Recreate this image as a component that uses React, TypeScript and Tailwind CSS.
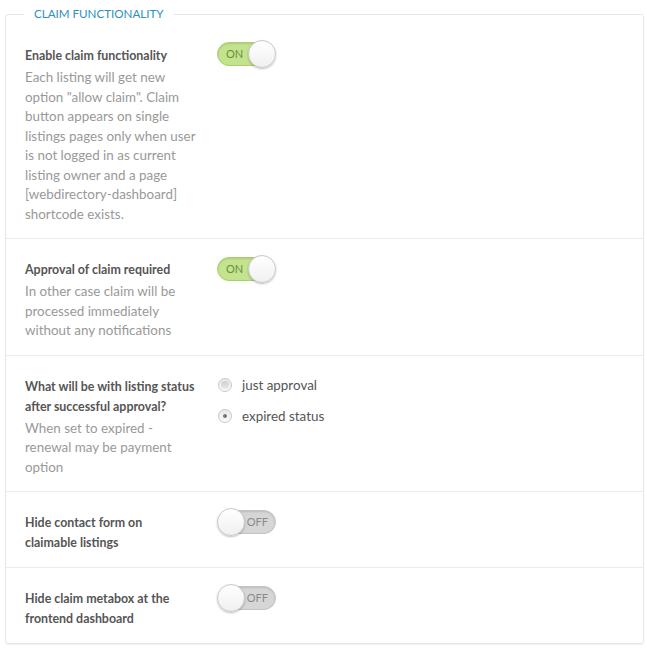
import React from "react";

function Toggle({ on }: { on: boolean }) {
  if (on) {
    return (
      <div className="relative h-[28px] w-[59px]">
        <div className="absolute left-0 top-[2px] h-[24px] w-[52px] rounded-full border border-[#a8cf72] bg-[#c4e38e] shadow-[inset_0_1px_2px_rgba(0,0,0,0.12)]">
          <span className="absolute left-[8px] top-[3px] text-[11px] leading-[16px] text-[#6b8f3a]">ON</span>
        </div>
        <div className="absolute right-0 top-0 h-[28px] w-[28px] rounded-full border border-[#c9c9c9] bg-gradient-to-b from-[#ffffff] to-[#f0f0f0] shadow-[0_1px_2px_rgba(0,0,0,0.25)]" />
      </div>
    );
  }
  return (
    <div className="relative h-[28px] w-[59px]">
      <div className="absolute right-0 top-[2px] h-[24px] w-[52px] rounded-full border border-[#c4c4c4] bg-[#d6d6d6] shadow-[inset_0_1px_2px_rgba(0,0,0,0.12)]">
        <span className="absolute right-[7px] top-[3px] text-[11px] leading-[16px] text-[#8a8a8a]">OFF</span>
      </div>
      <div className="absolute left-0 top-0 h-[28px] w-[28px] rounded-full border border-[#c9c9c9] bg-gradient-to-b from-[#ffffff] to-[#f0f0f0] shadow-[0_1px_2px_rgba(0,0,0,0.25)]" />
    </div>
  );
}

function Radio({ checked, label }: { checked: boolean; label: string }) {
  return (
    <div className="flex h-[31px] items-center">
      <div className="ml-[1px] flex h-[14px] w-[14px] items-center justify-center rounded-full border border-[#c8c8c8] bg-gradient-to-b from-[#e9e9e9] to-[#fafafa]">
        {checked ? (
          <div className="h-[4px] w-[4px] rounded-full bg-[#777]" />
        ) : (
          <div className="h-[8px] w-[8px] rounded-full bg-gradient-to-b from-[#d0d0d0] to-[#e8e8e8]" />
        )}
      </div>
      <span className="ml-[10px] text-[13.4px] leading-[20px] text-[#555]">{label}</span>
    </div>
  );
}

function Row({
  title,
  desc,
  control,
  first,
  last,
  controlPt = "pt-[16px]",
}: {
  title: React.ReactNode;
  desc?: string;
  control: React.ReactNode;
  first?: boolean;
  last?: boolean;
  controlPt?: string;
}) {
  return (
    <div className={`flex ${last ? "" : "border-b border-[#ebebeb]"}`}>
      <div className={`w-[211px] shrink-0 pl-[19px] pr-[18px] ${first ? "pt-[24px]" : "pt-[21px]"} pb-[14px]`}>
        <div className="max-w-[171px] text-[12.4px] font-bold leading-[20px] text-[#555]">{title}</div>
        {desc && <div className="mt-[2px] text-[13.4px] leading-[19.5px] text-[#999]">{desc}</div>}
      </div>
      <div className={`${first ? "pt-[18px]" : controlPt}`}>{control}</div>
    </div>
  );
}

export default function App() {
  return (
    <div className="min-h-[649px] bg-white pt-[6px]" style={{ fontFamily: "Lato, 'Open Sans', sans-serif" }}>
      <fieldset className="ml-[5px] mr-[3px] rounded-[3px] border border-[#e6e6e6] shadow-[0_1px_1px_rgba(0,0,0,0.06)]">
        <legend className="ml-[18px] px-[10px] text-[11.6px] uppercase leading-[16px] text-[#2b8fc2]">
          Claim functionality
        </legend>
        <Row
          first
          title="Enable claim functionality"
          desc={`Each listing will get new option "allow claim". Claim button appears on single listings pages only when user is not logged in as current listing owner and a page [webdirectory-dashboard] shortcode exists.`}
          control={<Toggle on />}
        />
        <Row
          title="Approval of claim required"
          desc="In other case claim will be processed immediately without any notifications"
          control={<Toggle on />}
        />
        <Row
          title="What will be with listing status after successful approval?"
          desc="When set to expired - renewal may be payment option"
          controlPt="pt-[14px]"
          control={
            <div>
              <Radio checked={false} label="just approval" />
              <Radio checked label="expired status" />
            </div>
          }
        />
        <Row title="Hide contact form on claimable listings" control={<Toggle on={false} />} />
        <Row last title="Hide claim metabox at the frontend dashboard" control={<Toggle on={false} />} />
      </fieldset>
    </div>
  );
}
